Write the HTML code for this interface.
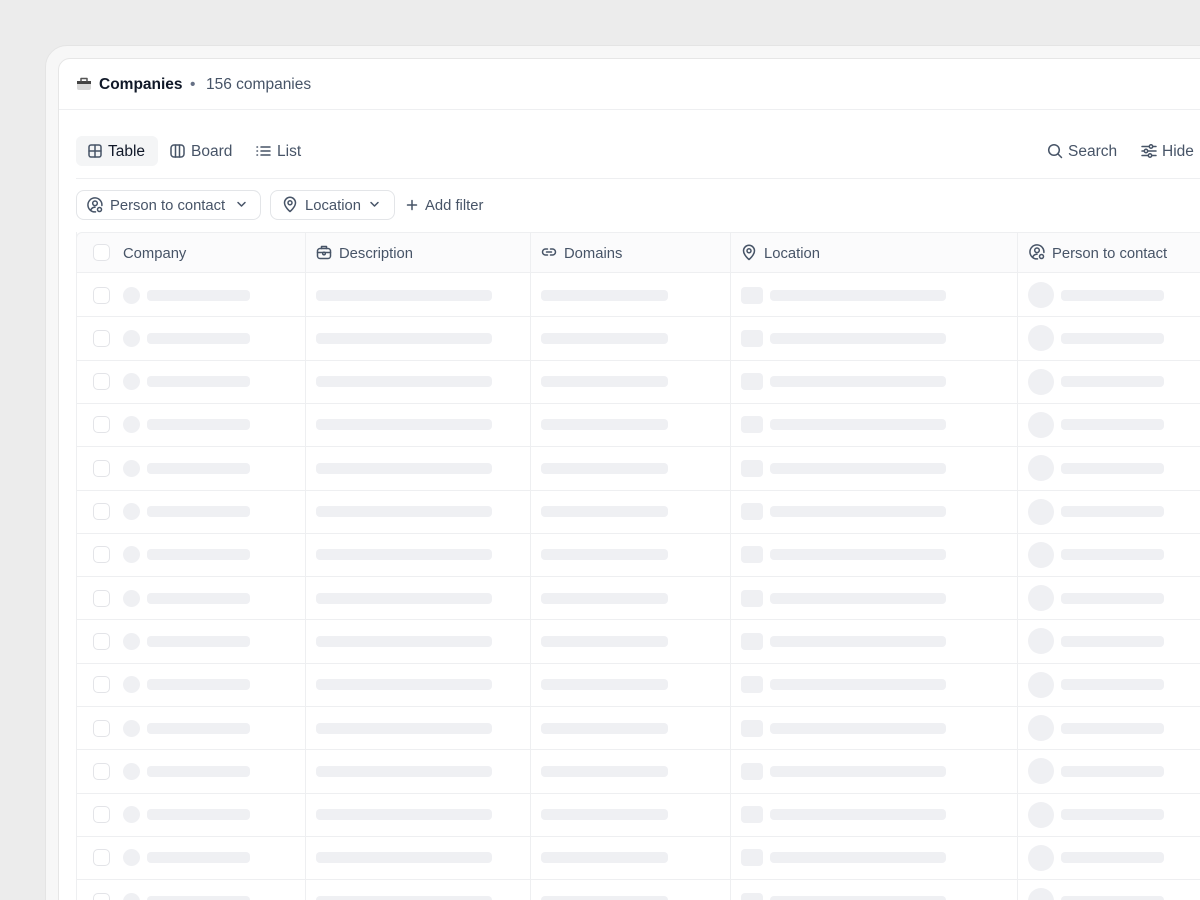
<!DOCTYPE html>
<html><head><meta charset="utf-8"><style>
*{box-sizing:border-box;margin:0;padding:0}
html,body{width:1200px;height:900px;overflow:hidden}
body{background:#ececec;font-family:"Liberation Sans",sans-serif;position:relative;color:#475467}
.outer{position:absolute;left:45px;top:45px;width:1200px;height:900px;background:#f7f7f7;border-radius:22px;border:1px solid #e4e4e4}
.panel{position:absolute;left:58px;top:58px;width:1200px;height:870px;background:#fff;border-radius:12px;border:1px solid #e6e6e6}
.abs{position:absolute}
.t{position:absolute;font-size:15.5px;white-space:nowrap;line-height:18px}
.hl{position:absolute;height:1px;background:#eeeff1}
.vl{position:absolute;width:1px;background:#eeeff1;top:232px;height:668px}
.sk{position:absolute;background:#eff0f3;border-radius:4px}
.cb{position:absolute;width:17px;height:17px;border:1px solid #e3e4e8;border-radius:5px;background:#fff}
.pill{position:absolute;height:30px;border:1px solid #e3e5e8;border-radius:8px;background:#fff}
svg{position:absolute;fill:none;stroke:#475467;stroke-width:1.5;stroke-linecap:round;stroke-linejoin:round}
.s{font-size:14.8px}
</style></head><body>
<div class="outer"></div>
<div class="panel"></div>
<svg style="left:76px;top:75px" width="16" height="16" viewBox="0 0 16 16"><rect x="1" y="6" width="14" height="9" rx="2" fill="#d9d9d9" stroke="none"/><rect x="1" y="6" width="14" height="3" fill="#444" stroke="none"/><path d="M5 6V3.5h6V6" stroke="#555" stroke-width="1.5"/></svg>
<div class="t" style="left:99px;top:76px;font-weight:bold;color:#101828">Companies</div>
<div class="t" style="left:190px;top:76px;color:#667085">•</div>
<div class="t" style="left:206px;top:76px;color:#475467">156 companies</div>
<div class="hl" style="left:59px;top:109px;width:1141px"></div>
<div class="abs" style="left:76px;top:136px;width:82px;height:30px;background:#f4f5f6;border-radius:6px"></div>
<svg style="left:88px;top:144px" width="14" height="14" viewBox="0 0 14 14" stroke="#101828"><rect x="1" y="1" width="12" height="12" rx="2"/><path d="M1 7h12M7 1v12"/></svg>
<div class="t" style="left:108px;top:143px;color:#101828">Table</div>
<svg style="left:170px;top:144px" width="15" height="14" viewBox="0 0 15 14"><rect x="1" y="1" width="13" height="12" rx="3"/><path d="M5.5 1v12M9.5 1v12"/></svg>
<div class="t" style="left:191px;top:143px">Board</div>
<svg style="left:256px;top:144px" width="15" height="14" viewBox="0 0 15 14"><path d="M1 3h.5M1 7h.5M1 11h.5M5 3h9M5 7h9M5 11h9"/></svg>
<div class="t" style="left:277px;top:143px">List</div>
<svg style="left:1047px;top:143px" width="16" height="16" viewBox="0 0 16 16"><circle cx="7" cy="7" r="5.3"/><path d="M11 11l3.5 3.5"/></svg>
<div class="t" style="left:1068px;top:143px">Search</div>
<svg style="left:1141px;top:143px" width="16" height="16" viewBox="0 0 16 16"><path d="M1 3.5h14M1 8h14M1 12.5h14"/><circle cx="10" cy="3.5" r="1.7" fill="#fff"/><circle cx="5" cy="8" r="1.7" fill="#fff"/><circle cx="9" cy="12.5" r="1.7" fill="#fff"/></svg>
<div class="t" style="left:1162px;top:143px">Hide</div>
<div class="hl" style="left:76px;top:178px;width:1124px"></div>
<div class="pill" style="left:76px;top:190px;width:185px"></div>
<svg style="left:87px;top:197px" width="16" height="16" viewBox="0 0 16 16"><path d="M8.5 14.9A7 7 0 1 1 14.9 8.5"/><circle cx="8" cy="6.3" r="2.3"/><path d="M4 12.5c.8-1.5 2.3-2.3 4-2.3"/><circle cx="12.5" cy="12.5" r="2"/></svg>
<div class="t s" style="left:110px;top:197px">Person to contact</div>
<svg style="left:236px;top:200px" width="11" height="8" viewBox="0 0 11 8"><path d="M2 2.5l3.5 3.5 3.5-3.5"/></svg>
<div class="pill" style="left:270px;top:190px;width:125px"></div>
<svg style="left:282px;top:196px" width="16" height="17" viewBox="0 0 16 17"><path d="M8 15.5s5.5-4.5 5.5-8.7a5.5 5.5 0 0 0-11 0C2.5 11 8 15.5 8 15.5z"/><circle cx="8" cy="6.8" r="2"/></svg>
<div class="t s" style="left:305px;top:197px">Location</div>
<svg style="left:369px;top:200px" width="11" height="8" viewBox="0 0 11 8"><path d="M2 2.5l3.5 3.5 3.5-3.5"/></svg>
<svg style="left:406px;top:199px" width="12" height="12" viewBox="0 0 12 12"><path d="M6 1.5v9M1.5 6h9"/></svg>
<div class="t s" style="left:425px;top:197px">Add filter</div>
<div class="abs" style="left:76px;top:232px;width:1124px;height:41px;background:#fbfbfc;border:1px solid #eeeff1;border-right:none;border-radius:6px 0 0 0"></div>
<div class="cb" style="left:93px;top:244px"></div>
<div class="t s" style="left:123px;top:245px">Company</div>
<svg style="left:316px;top:244px" width="16" height="16" viewBox="0 0 16 16"><rect x="1.5" y="4.5" width="13" height="10" rx="2.5"/><path d="M5.5 4.5V2.5h5v2M1.5 8.5h13"/><circle cx="8" cy="9.5" r="1.3" fill="#fff"/></svg>
<div class="t s" style="left:339px;top:245px">Description</div>
<svg style="left:541px;top:245px" width="16" height="14" viewBox="0 0 16 14"><path d="M6.5 4H4.5a3 3 0 0 0 0 6h2M9.5 4h2a3 3 0 0 1 0 6h-2M5.5 7h5"/></svg>
<div class="t s" style="left:564px;top:245px">Domains</div>
<svg style="left:741px;top:244px" width="16" height="17" viewBox="0 0 16 17"><path d="M8 15.5s5.5-4.5 5.5-8.7a5.5 5.5 0 0 0-11 0C2.5 11 8 15.5 8 15.5z"/><circle cx="8" cy="6.8" r="2"/></svg>
<div class="t s" style="left:764px;top:245px">Location</div>
<svg style="left:1029px;top:244px" width="16" height="16" viewBox="0 0 16 16"><path d="M8.5 14.9A7 7 0 1 1 14.9 8.5"/><circle cx="8" cy="6.3" r="2.3"/><path d="M4 12.5c.8-1.5 2.3-2.3 4-2.3"/><circle cx="12.5" cy="12.5" r="2"/></svg>
<div class="t s" style="left:1052px;top:245px">Person to contact</div>
<div class="abs" style="left:76px;top:232px;width:1px;height:668px;background:#eeeff1"></div>
<div class="vl" style="left:305px"></div>
<div class="vl" style="left:530px"></div>
<div class="vl" style="left:730px"></div>
<div class="vl" style="left:1017px"></div>
<div id="rows"></div>
<script>
var h='';
for(var i=0;i<15;i++){var y=273+i*43.3;
if(i<14)h+='<div class="hl" style="left:76px;width:1124px;top:'+(y+43.3).toFixed(1)+'px"></div>';
var c=y+22;
h+='<div class="cb" style="left:93px;top:'+(c-8.5)+'px"></div>';
h+='<div class="sk" style="left:123px;top:'+(c-8.5)+'px;width:17px;height:17px;border-radius:50%"></div>';
h+='<div class="sk" style="left:147px;top:'+(c-5.5)+'px;width:103px;height:11px"></div>';
h+='<div class="sk" style="left:316px;top:'+(c-5.5)+'px;width:176px;height:11px"></div>';
h+='<div class="sk" style="left:541px;top:'+(c-5.5)+'px;width:127px;height:11px"></div>';
h+='<div class="sk" style="left:741px;top:'+(c-8.5)+'px;width:22px;height:17px"></div>';
h+='<div class="sk" style="left:770px;top:'+(c-5.5)+'px;width:176px;height:11px"></div>';
h+='<div class="sk" style="left:1028px;top:'+(c-13)+'px;width:26px;height:26px;border-radius:50%"></div>';
h+='<div class="sk" style="left:1061px;top:'+(c-5.5)+'px;width:103px;height:11px"></div>';}
document.getElementById('rows').innerHTML=h;
</script>
</body></html>
